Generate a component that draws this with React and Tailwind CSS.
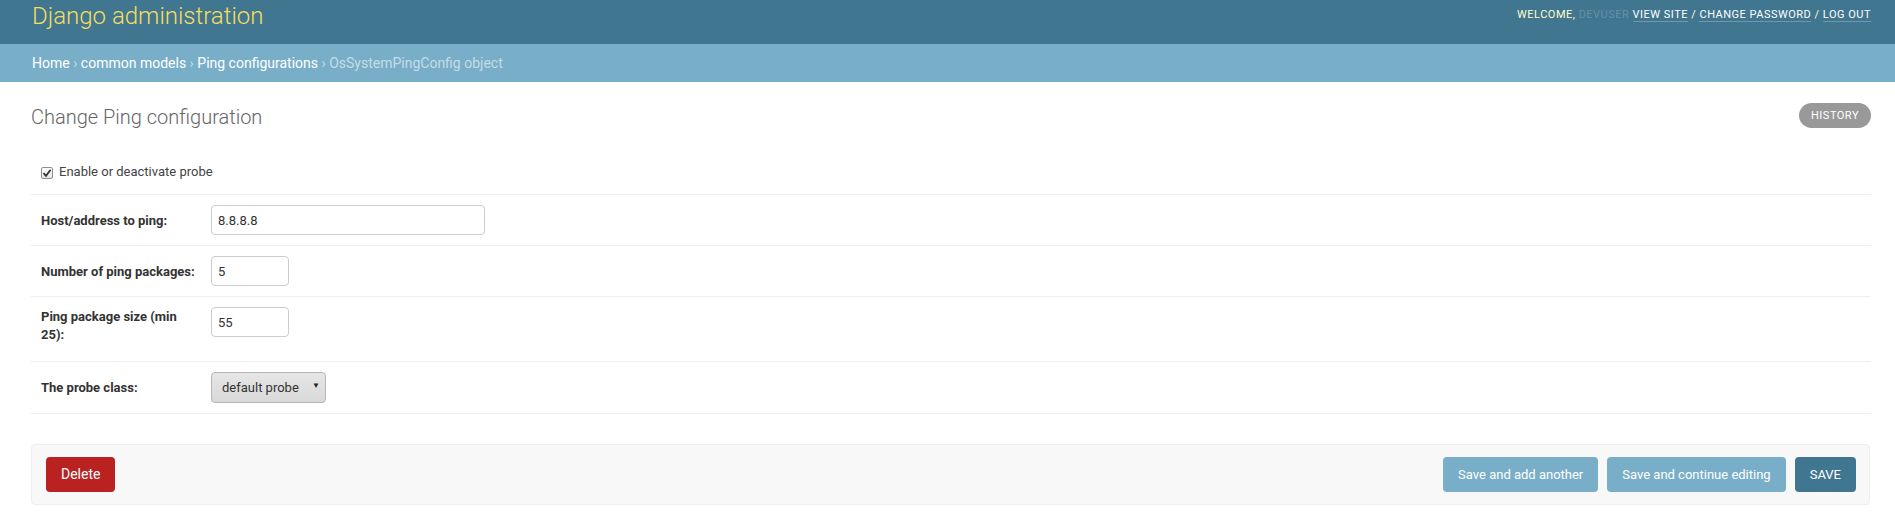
import React from 'react';

const font = { fontFamily: 'Roboto, "Noto Sans", sans-serif' };

const Header = () => (
  <div className="h-[44px] bg-[#417690] flex justify-between pl-[32px] pr-[24px]">
    <h1 className="pt-[4px] text-[24px] leading-[24px] font-light text-[#f5dd5d]">Django administration</h1>
    <div className="pt-[8px] text-[11px] leading-[14px] uppercase tracking-[0.5px] text-[#ffffcc]">
      WELCOME, <span className="text-white/20">Devuser</span>{' '}
      <a className="text-white border-b border-white/25">View site</a> /{' '}
      <a className="text-white border-b border-white/25">Change password</a> /{' '}
      <a className="text-white border-b border-white/25">Log out</a>
    </div>
  </div>
);

const Breadcrumbs = () => (
  <div className="bg-[#79aec8] py-[10px] pl-[32px] text-[14px] leading-[18px] text-[#c4dce8]">
    <a className="text-white">Home</a> › <a className="text-white">common models</a> ›{' '}
    <a className="text-white">Ping configurations</a> › OsSystemPingConfig object
  </div>
);

const Row = ({ label, children, labelClass = 'pt-[7px]' }) => (
  <div className="flex items-start px-[10px] pt-[10px] pb-[10px] border-b border-[#eeeeee]">
    <label className={`w-[160px] mr-[10px] text-[13px] leading-[18px] font-bold text-[#333] ${labelClass}`}>{label}</label>
    {children}
  </div>
);

const TextInput = ({ value, width }) => (
  <input
    readOnly
    value={value}
    className={`${width} h-[30px] border border-[#cccccc] rounded-[4px] px-[6px] text-[13px] text-[#333] bg-white outline-none`}
  />
);

export default function App() {
  return (
    <div style={font} className="bg-white min-h-[525px] text-[#333]">
      <Header />
      <Breadcrumbs />
      <div className="pl-[31px] pr-[24px] pt-[21px]">
        <div className="flex justify-between items-start">
          <h1 className="mt-[2px] text-[20px] leading-[24px] font-light text-[#666]">Change Ping configuration</h1>
          <a className="h-[25px] px-[12px] rounded-full bg-[#999999] text-white text-[11px] leading-[25px] uppercase tracking-[0.5px]">
            History
          </a>
        </div>

        <div className="mt-[24px]">
          <div className="flex items-center px-[10px] pt-[10px] pb-[13px] border-b border-[#eeeeee]">
            <span className="w-[12px] h-[12px] mt-[1px] border border-[#8f8f8f] rounded-[2px] bg-gradient-to-b from-white to-[#e4e4e4] flex items-center justify-center">
              <svg width="10" height="10" viewBox="0 0 10 10">
                <path d="M1.5 5.2 L4 7.8 L8.6 1.8" fill="none" stroke="#333" strokeWidth="1.8" />
              </svg>
            </span>
            <span className="ml-[6px] text-[13px] leading-[18px] text-[#444]">Enable or deactivate probe</span>
          </div>

          <Row label="Host/address to ping:">
            <TextInput value="8.8.8.8" width="w-[274px]" />
          </Row>
          <Row label="Number of ping packages:">
            <TextInput value="5" width="w-[78px]" />
          </Row>
          <Row label="Ping package size (min 25):" labelClass="pt-[1px] pb-[7px]">
            <TextInput value="55" width="w-[78px]" />
          </Row>
          <Row label="The probe class:">
            <div className="relative w-[115px] h-[31px]">
              <select className="appearance-none w-full h-full border border-[#b5b5b5] rounded-[4px] bg-gradient-to-b from-[#e6e6e6] to-[#d9d9d9] pl-[10px] text-[13px] text-[#333] outline-none">
                <option>default probe</option>
              </select>
              <span className="absolute right-[6px] top-[9px] text-[8px] leading-[10px] text-[#222] pointer-events-none">▼</span>
            </div>
          </Row>
        </div>

        <div className="mt-[30px] mr-[1px] flex items-center justify-between border border-[#eeeeee] rounded-[4px] bg-[#f8f8f8] pl-[14px] pr-[13px] py-[12px]">
          <a className="h-[35px] px-[15px] rounded-[4px] bg-[#ba2121] text-white text-[14px] leading-[35px]">Delete</a>
          <div className="flex gap-[9px]">
            <button className="h-[35px] px-[15px] rounded-[4px] bg-[#79aec8] text-white text-[13px]">Save and add another</button>
            <button className="h-[35px] px-[15px] rounded-[4px] bg-[#79aec8] text-white text-[13px]">Save and continue editing</button>
            <button className="h-[35px] px-[15px] rounded-[4px] bg-[#417690] text-white text-[13px] uppercase">Save</button>
          </div>
        </div>
      </div>
    </div>
  );
}
